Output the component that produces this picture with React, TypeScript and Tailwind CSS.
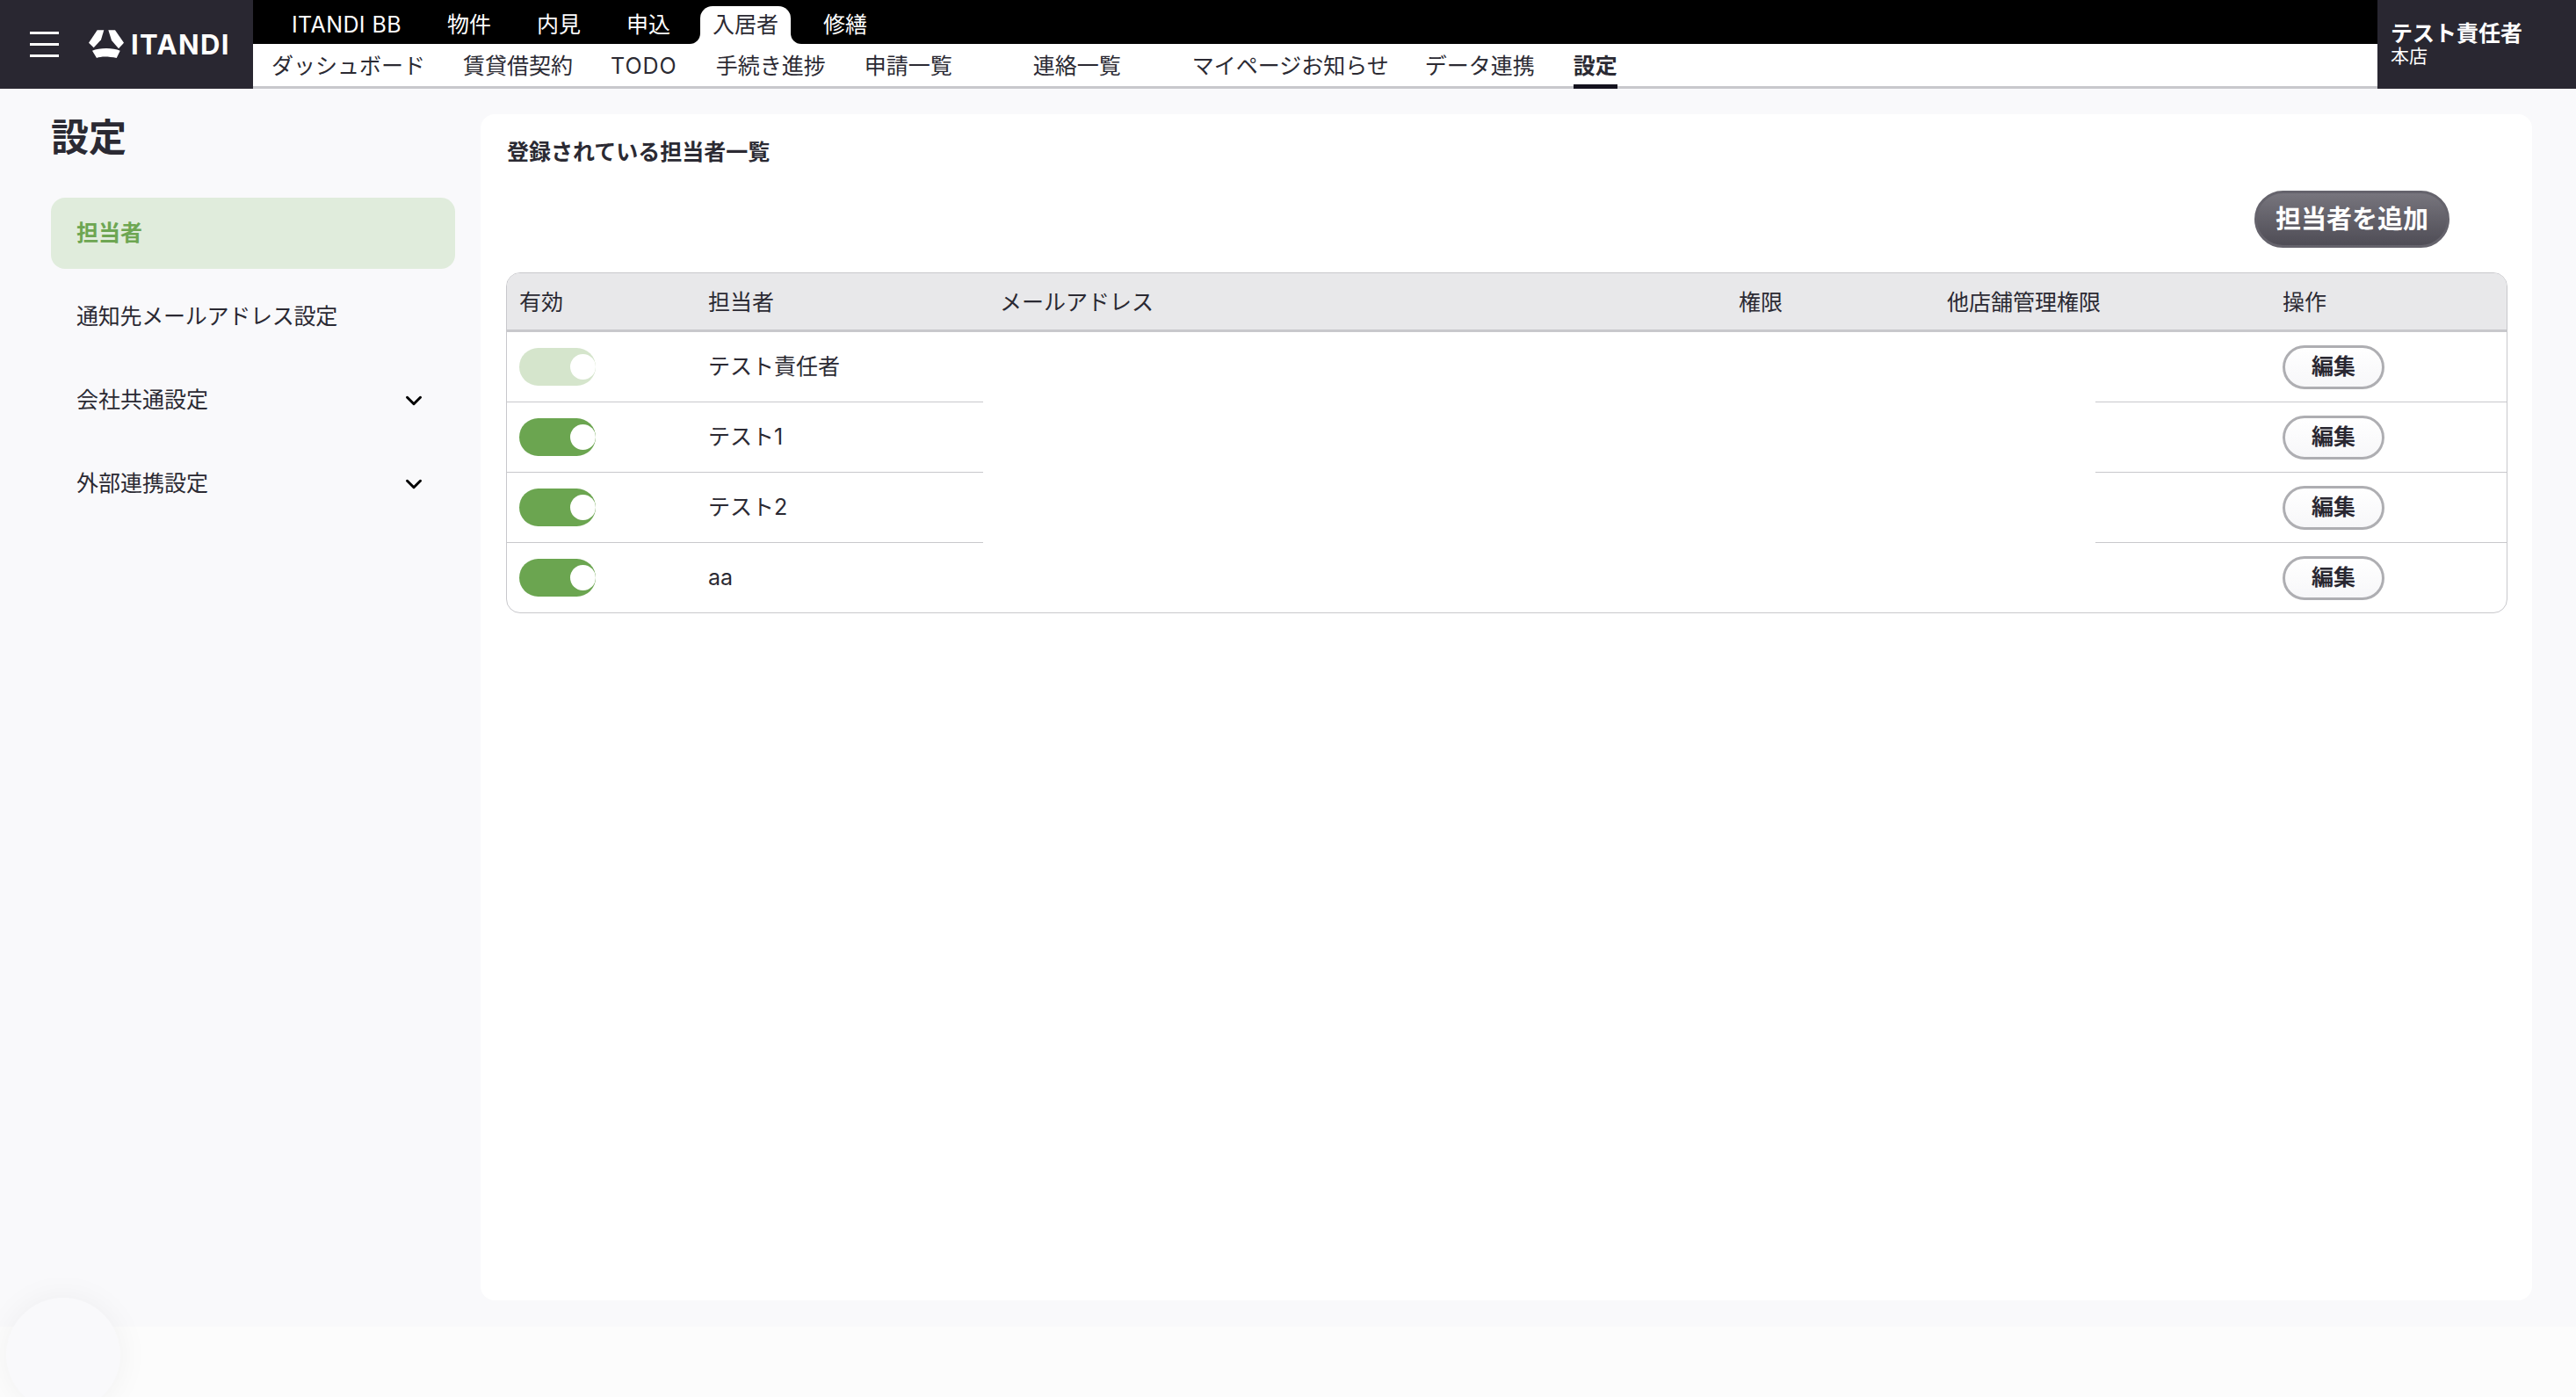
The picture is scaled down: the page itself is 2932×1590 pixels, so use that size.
import { ChevronDown } from "lucide-react";

const TOP_NAV = ["物件", "内見", "申込"];

const SUB_NAV = [
  { label: "ダッシュボード", className: "ml-[21px]" },
  { label: "賃貸借契約", className: "ml-[43px]" },
  { label: "TODO", className: "ml-[43px] tracking-[1px]" },
  { label: "手続き進捗", className: "ml-[44px]" },
  { label: "申請一覧", className: "ml-[44px]" },
  { label: "連絡一覧", className: "ml-[92px]" },
  { label: "マイページお知らせ", className: "ml-[81px]" },
  { label: "データ連携", className: "ml-[41px]" },
];

const COLUMNS = [
  { label: "有効", className: "w-[215px]" },
  { label: "担当者", className: "w-[332px]" },
  { label: "メールアドレス", className: "w-[841px]" },
  { label: "権限", className: "w-[237px]" },
  { label: "他店舗管理権限", className: "w-[382px]" },
  { label: "操作", className: "" },
];

const MEMBERS = [
  { name: "テスト責任者", disabled: true },
  { name: "テスト1", disabled: false },
  { name: "テスト2", disabled: false },
  { name: "aa", disabled: false },
];

const SIDE_NAV = [
  { label: "担当者", active: true },
  { label: "通知先メールアドレス設定", tight: true },
  { label: "会社共通設定", expandable: true },
  { label: "外部連携設定", expandable: true },
];

function Logo() {
  return (
    <svg viewBox="0 0 40 35" className="h-[35px] w-[40px]" fill="#ffffff">
      <path d="M9.7 1.3 L17.3 1.3 L14 12.3 L5.7 21.3 L0 15.7 Z" />
      <path d="M22.3 1.3 L30 1.3 L40 15.7 L34 22.3 L26 13 Z" />
      <path d="M4 24.7 C12 21 28 21 35.7 24.7 L31.7 33 C22 31 14 31 9 33 Z" />
    </svg>
  );
}

function Toggle({ disabled }: { disabled: boolean }) {
  return (
    <div
      className={`flex h-[43px] w-[87px] items-center justify-end overflow-hidden rounded-full ${
        disabled ? "bg-[#d5e5cc]" : "bg-[#6ba550]"
      }`}
    >
      <div className="h-[29px] w-[29px] rounded-full bg-white" />
    </div>
  );
}

export default function App() {
  return (
    <div className="relative flex h-[1590px] w-[2932px] flex-col overflow-hidden bg-[#f9f9fb] font-['Inter','Noto_Sans_CJK_JP',sans-serif] text-[25px] text-[#2b2a33]">
      <header className="flex h-[101px] shrink-0">
        <div className="flex w-[288px] shrink-0 items-center bg-[#292731]">
          <div className="ml-[34px] flex w-[33px] flex-col gap-[10px]">
            <div className="h-[3px] bg-white" />
            <div className="h-[3px] bg-white" />
            <div className="h-[3px] bg-white" />
          </div>
          <div className="ml-[34px] mt-[-1px]">
            <Logo />
          </div>
          <div className="ml-[8px] text-[31px] leading-none font-bold tracking-[1.4px] text-white">ITANDI</div>
        </div>

        <div className="flex min-w-0 flex-1 flex-col">
          <nav className="flex h-[50px] items-end bg-black text-white">
            <div className="ml-[18px] flex h-[43px] items-center px-[26px] tracking-[0.4px]">ITANDI BB</div>
            {TOP_NAV.map((item) => (
              <div key={item} className="flex h-[43px] items-center px-[26px]">
                {item}
              </div>
            ))}
            <div className="relative ml-[8px] flex h-[43px] items-center rounded-t-[14px] bg-white px-[14px] text-[#2b2a33]">
              入居者
              <span className="absolute bottom-0 left-[-12px] h-[12px] w-[12px] bg-white">
                <span className="block h-full w-full rounded-br-[12px] bg-black" />
              </span>
              <span className="absolute right-[-12px] bottom-0 h-[12px] w-[12px] bg-white">
                <span className="block h-full w-full rounded-bl-[12px] bg-black" />
              </span>
            </div>
            <div className="ml-[11px] flex h-[43px] items-center px-[26px]">修繕</div>
          </nav>
          <nav className="flex h-[51px] items-center border-b-[3px] border-[#c8c8cc] bg-white pt-[3px]">
            {SUB_NAV.map((item) => (
              <div key={item.label} className={item.className}>
                {item.label}
              </div>
            ))}
            <div className="relative ml-[44px] mt-[-3px] self-stretch pt-[3px] font-bold">
              <div className="flex h-full items-center">設定</div>
              <div className="absolute right-0 bottom-[-3px] left-0 h-[5px] bg-[#14121e]" />
            </div>
          </nav>
        </div>

        <div className="flex w-[226px] shrink-0 flex-col bg-[#292731] pt-[22px] pl-[15px] text-white">
          <div className="text-[25px] leading-[32px] font-bold">テスト責任者</div>
          <div className="text-[21px] leading-[20px]">本店</div>
        </div>
      </header>

      <div className="flex min-h-0 flex-1">
        <aside className="w-[547px] shrink-0 pl-[58px]">
          <h1 className="mt-[31px] text-[43px] leading-[48px] font-bold">設定</h1>
          <nav className="mt-[45px] flex w-[460px] flex-col gap-[14px]">
            {SIDE_NAV.map((item) => (
              <div
                key={item.label}
                className={`flex h-[81px] items-center justify-between rounded-[16px] pr-[32px] pl-[29px] ${
                  item.active ? "bg-[#e0ecdc] font-bold text-[#6da652]" : ""
                } ${item.tight ? "tracking-[-0.25px]" : ""}`}
              >
                {item.label}
                {item.expandable && <ChevronDown className="h-[30px] w-[30px] text-black" strokeWidth={2.4} />}
              </div>
            ))}
          </nav>
        </aside>

        <main className="mt-[29px] h-[1350px] w-[2335px] rounded-[16px] bg-white pt-[29px] pl-[30px]">
          <h2 className="text-[25px] leading-[28px] font-bold">登録されている担当者一覧</h2>

          <div className="mt-[30px] mr-[94px] flex justify-end">
            <button
              type="button"
              className="flex h-[65px] w-[222px] items-center justify-center rounded-full border-[3px] border-[#65636c] bg-gradient-to-b from-[#77757d] to-[#4f4d56] text-[29px] font-bold text-white"
            >
              担当者を追加
            </button>
          </div>

          <div className="mt-[28px] ml-[-1px] w-[2278px] overflow-hidden rounded-[16px] border-[1.5px] border-[#c8c8cc]">
            <div className="flex h-[67px] items-center border-b-[3px] border-[#c8c8cc] bg-[#e8e8ea] pt-[3px]">
              {COLUMNS.map((col) => (
                <div key={col.label} className={`pl-[14px] ${col.className}`}>
                  {col.label}
                </div>
              ))}
            </div>
            {MEMBERS.map((member, i) => {
              const line = i < MEMBERS.length - 1 ? "border-b-[1.5px] border-[#c8c8cc]" : "";
              return (
                <div key={member.name} className="flex h-[80px] last:h-[79px]">
                  <div className={`flex w-[542px] items-center ${line}`}>
                    <div className="w-[215px] pl-[14px]">
                      <Toggle disabled={member.disabled} />
                    </div>
                    <div className="pl-[14px]">{member.name}</div>
                  </div>
                  <div className="flex-1" />
                  <div className={`flex w-[468px] items-center pl-[213px] ${line}`}>
                    <button
                      type="button"
                      className="flex h-[50px] w-[116px] items-center justify-center rounded-full border-[3px] border-[#aeaeb2] bg-gradient-to-b from-white to-[#f7f7f9] font-bold text-[#292731]"
                    >
                      編集
                    </button>
                  </div>
                </div>
              );
            })}
          </div>
        </main>
      </div>

      <div className="h-[80px] shrink-0 bg-[#fcfcfc]" />

      <div className="absolute top-[1477px] left-[7px] h-[130px] w-[130px] rounded-full bg-[#f9f9fb] shadow-[0_0_36px_rgba(0,0,0,0.05)]" />
    </div>
  );
}
